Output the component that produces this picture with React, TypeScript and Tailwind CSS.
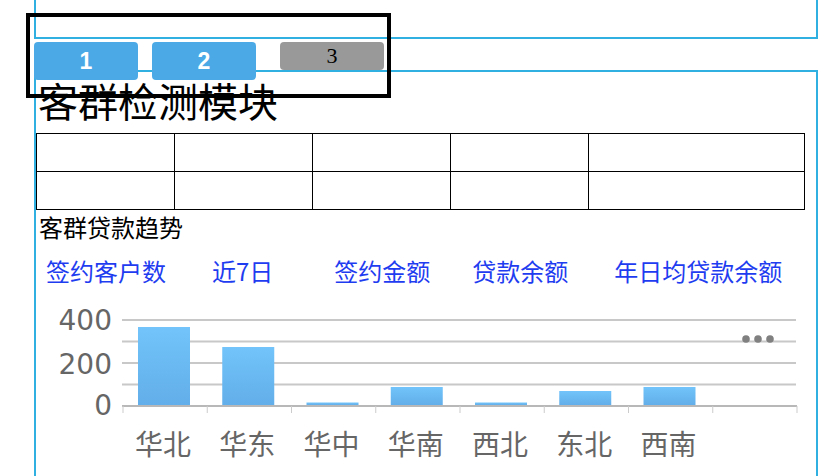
const bars = [
  { name: '华北', h: 78 },
  { name: '华东', h: 58 },
  { name: '华中', h: 2.5 },
  { name: '华南', h: 18 },
  { name: '西北', h: 2.5 },
  { name: '东北', h: 14 },
  { name: '西南', h: 18 },
]

const band = 84.25
const grid = [37, 58.5, 80, 101.5]

function LoanChart() {
  return (
    <svg width="780" height="192" viewBox="0 0 780 192" className="block">
      <defs>
        <linearGradient id="barFill" x1="0" y1="0" x2="0" y2="1">
          <stop offset="0%" stopColor="#72c4fa" />
          <stop offset="100%" stopColor="#62aeea" />
        </linearGradient>
      </defs>
      {grid.map((y) => (
        <rect key={y} x="86" y={y - 1} width="674" height="2" fill="#c8c8c8" />
      ))}
      <rect x="86" y="122" width="675" height="2" fill="#b8b8b8" />
      {Array.from({ length: 9 }).map((_, i) => (
        <rect key={i} x={86.5 + i * band} y="123" width="1" height="7" fill="#cccccc" />
      ))}
      {bars.map((b, i) => (
        <rect key={b.name} x={102 + i * band} y={122 - b.h} width="52" height={b.h} fill="url(#barFill)" />
      ))}
      {[
        ['400', 37],
        ['200', 81],
        ['0', 122],
      ].map(([t, y]) => (
        <text
          key={t}
          x="76"
          y={y}
          textAnchor="end"
          dominantBaseline="central"
          fontSize="28"
          fill="#666666"
          style={{ fontFamily: '"DejaVu Sans", Verdana, sans-serif' }}
        >
          {t}
        </text>
      ))}
      {bars.map((b, i) => (
        <text
          key={b.name}
          x={87 + band * (i + 0.5) - 2}
          y="160"
          textAnchor="middle"
          dominantBaseline="central"
          fontSize="28"
          fill="#666666"
          style={{ fontFamily: '"Noto Sans CJK SC", sans-serif' }}
        >
          {b.name}
        </text>
      ))}
      <circle cx="710" cy="56" r="3.8" fill="#808080" />
      <circle cx="722" cy="56" r="3.8" fill="#808080" />
      <circle cx="734" cy="56" r="3.8" fill="#808080" />
    </svg>
  )
}

export default function App() {
  const cols = ['w-[138px]', 'w-[138px]', 'w-[138px]', 'w-[138px]', 'w-[216px]']
  return (
    <div className="relative w-[820px] h-[476px] overflow-hidden bg-white pl-[34px] font-['Noto_Sans_CJK_SC',sans-serif]">
      <div className="w-[784px] h-[39px] border-2 border-t-0 border-[#30b0e0]"></div>

      <div className="flex items-start h-[28px] mt-[3px]">
        <button className="relative z-10 w-[104px] h-[38px] rounded-[4px] bg-[#4ba9e6] text-white text-[23px] font-bold leading-[38px] font-['Liberation_Sans',Arial,sans-serif]">
          1
        </button>
        <button className="relative z-10 ml-[14px] w-[104px] h-[38px] rounded-[4px] bg-[#4ba9e6] text-white text-[23px] font-bold leading-[38px] font-['Liberation_Sans',Arial,sans-serif]">
          2
        </button>
        <button className="relative z-10 ml-[24px] w-[104px] h-[28px] rounded-[4px] bg-[#999999] text-black text-[22px] leading-[28px] font-['Liberation_Serif','Times_New_Roman',serif]">
          3
        </button>
      </div>

      <div className="w-[784px] h-[420px] border-2 border-[#30b0e0]">
        <h1 className="pl-[2px] text-[40px] leading-[56px] text-black font-normal">客群检测模块</h1>

        <div className="mt-[5px] w-[769px] border-l border-t border-black">
          {[0, 1].map((r) => (
            <div key={r} className="flex">
              {cols.map((c, i) => (
                <div key={i} className={`${c} h-[38px] border-r border-b border-black`}></div>
              ))}
            </div>
          ))}
        </div>

        <h2 className="pl-[3px] text-[24px] leading-[34px] text-black">客群贷款趋势</h2>

        <div className="mt-[15px] flex text-[24px] leading-[24px] text-[#1e3cf0] whitespace-nowrap">
          <span className="ml-[10px]">签约客户数</span>
          <span className="ml-[46px]">近7日</span>
          <span className="ml-[61px]">签约金额</span>
          <span className="ml-[42px]">贷款余额</span>
          <span className="ml-[46px]">年日均贷款余额</span>
        </div>

        <LoanChart />
      </div>

      <div className="absolute left-[26px] top-[13px] w-[365px] h-[85px] border-4 border-black pointer-events-none"></div>
    </div>
  )
}
